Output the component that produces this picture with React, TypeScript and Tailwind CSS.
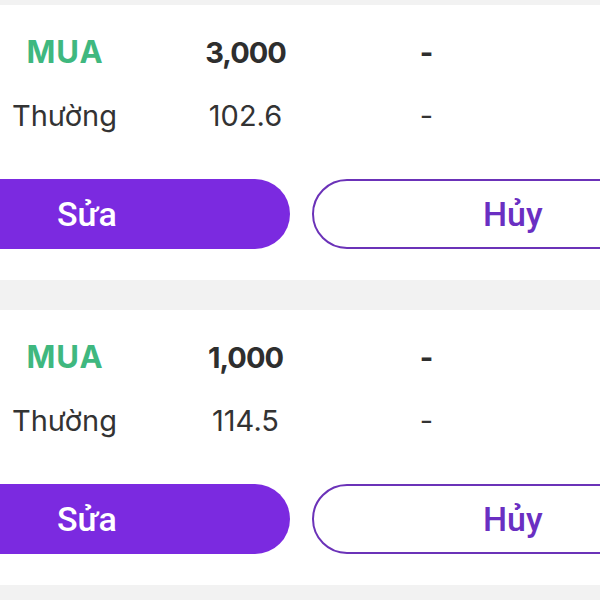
import React from "react";

type Order = { side: string; qty: string; kind: string; price: string };

const orders: Order[] = [
  { side: "MUA", qty: "3,000", kind: "Thường", price: "102.6" },
  { side: "MUA", qty: "1,000", kind: "Thường", price: "114.5" },
];

function OrderCard({ order }: { order: Order }) {
  return (
    <div className="bg-white h-[275px] pt-[16px] overflow-hidden">
      <div className="grid grid-cols-[181px_181px_181px_181px] -ml-[26px] h-[63px] items-center font-['Inter',sans-serif] text-[29px]">
        <div className="text-center font-bold text-[31px] text-[#3fb87f] tracking-[1px] pl-[1px]">{order.side}</div>
        <div className="text-center font-bold text-[#2e2e2e] tracking-[-1px]">{order.qty}</div>
        <div className="text-center font-bold text-[#2e2e2e]">-</div>
        <div />
      </div>
      <div className="grid grid-cols-[181px_181px_181px_181px] -ml-[26px] h-[63px] items-center font-['Inter',sans-serif] text-[29px] text-[#333333]">
        <div className="text-center">{order.kind}</div>
        <div className="text-center">{order.price}</div>
        <div className="text-center">-</div>
        <div />
      </div>
      <div className="flex gap-[22px] mt-[32px] -ml-[40px] font-['Roboto',sans-serif] font-medium text-[34px]">
        <button className="shrink-0 w-[330px] h-[70px] rounded-full bg-[#7b2ae0] text-white flex items-center pl-[97px]">
          Sửa
        </button>
        <button className="shrink-0 w-[400px] h-[70px] rounded-full border-[2.5px] border-[#6b32b8] bg-white text-[#6a2fc2] flex items-center pl-[169px]">
          Hủy
        </button>
      </div>
    </div>
  );
}

export default function App() {
  return (
    <div className="w-[600px] h-[600px] bg-[#f2f2f2] pt-[5px] flex flex-col gap-[30px] overflow-hidden">
      {orders.map((o, i) => (
        <OrderCard key={i} order={o} />
      ))}
    </div>
  );
}
